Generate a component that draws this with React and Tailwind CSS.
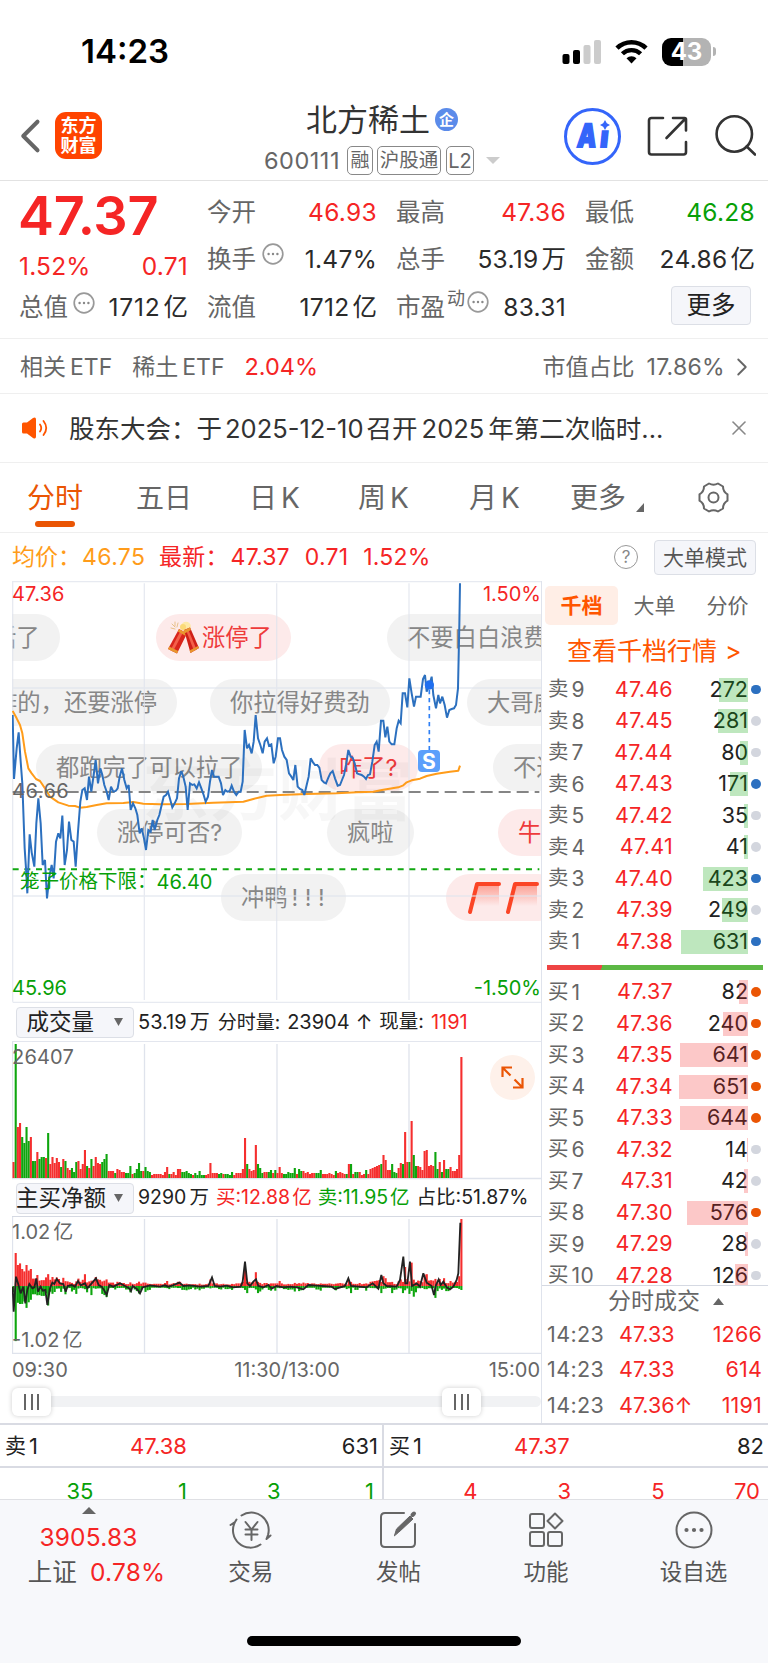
import { ChevronLeft, ChevronRight, X } from 'lucide-react';

const QUOTE_COLUMNS = [
  [
    { label: '今开', value: '46.93', color: 'text-[#f52525]' },
    { label: '换手', tip: true, value: '1.47%', color: 'text-[#2a2a2a]' },
    { label: '流值', value: '1712', unit: '亿', color: 'text-[#2a2a2a]' },
  ],
  [
    { label: '最高', value: '47.36', color: 'text-[#f52525]' },
    { label: '总手', value: '53.19', unit: '万', color: 'text-[#2a2a2a]' },
    { label: '市盈', sup: '动', tip: true, value: '83.31', color: 'text-[#2a2a2a]' },
  ],
];

const TABS = [
  { name: '分时', width: 'w-[109px]' },
  { name: '五日', width: 'w-[113px]' },
  { name: '日', k: true, width: 'w-[109px]' },
  { name: '周', k: true, width: 'w-[111px]' },
  { name: '月', k: true, width: 'w-[110px]' },
];

const SELLS = [
  ['9', '47.46', 272, true],
  ['8', '47.45', 281, false],
  ['7', '47.44', 80, false],
  ['6', '47.43', 171, true],
  ['5', '47.42', 35, false],
  ['4', '47.41', 41, false],
  ['3', '47.40', 423, true],
  ['2', '47.39', 249, false],
  ['1', '47.38', 631, true],
];

const BUYS = [
  ['1', '47.37', 82, true],
  ['2', '47.36', 240, true],
  ['3', '47.35', 641, true],
  ['4', '47.34', 651, true],
  ['5', '47.33', 644, true],
  ['6', '47.32', 14, false],
  ['7', '47.31', 42, false],
  ['8', '47.30', 576, true],
  ['9', '47.29', 28, false],
  ['10', '47.28', 126, false],
];

const TRADES = [
  ['14:23', '47.33', '1266'],
  ['14:23', '47.33', '614'],
  ['14:23', '47.36↑', '1191'],
];

// one bar per minute: direction + height
const VOLUMES = (
  'r16 g134 r51 r55 g41 g35 g51 g37 r41 g17 g17 r26 g19 g21 g21 r20 g45 r14 r21 r15 r20 r16 g11 r19 g17 r10 r8 g10 g6 g16 ' +
  'r17 r9 r14 r28 g12 r10 g19 r12 r21 r15 r14 g16 g19 g24 r7 r7 r7 g5 r9 r8 r6 r6 g5 g5 g12 r4 g5 g9 g15 g7 r7 g11 g7 g6 ' +
  'r3 r4 r4 r4 r4 r3 r6 r11 g4 r4 r6 r3 r9 r9 g6 g6 g7 g5 g4 r3 g5 g3 g7 g3 g3 r3 r4 r15 r5 r5 r5 g4 g5 r4 g4 g4 g3 g6 r3 r5 ' +
  'r5 r5 r9 r40 g14 r9 r7 r8 r33 g14 g10 g5 r6 r6 g6 g8 r5 g8 r5 r11 r5 g4 g4 g6 g5 g5 g10 r4 g9 g7 r7 r5 r6 r4 r5 r5 g5 g5 ' +
  'g8 r4 r4 r4 r5 r4 r3 g7 r5 r6 r5 r4 g4 r14 g14 r4 g6 g6 r6 r3 r4 g8 r4 r9 r10 r11 r12 r13 g14 r23 r18 r8 r8 g14 g6 g5 r10 ' +
  'r15 g14 r46 r16 g16 r57 g23 g12 r12 r11 r8 r27 r28 r12 r13 r12 g26 g9 r16 g6 r18 g9 g9 r11 r7 r7 r9 r23 r121'
).split(' ').map((s) => ({ up: s[0] === 'r', h: Number(s.slice(1)) }));

const STEP = 450 / VOLUMES.length;

const PRICE_LINE =
  '38,420 42,612 50,520 56,472 62,560 67,625 74,820 78,880 82,955 89,778 95,832 103,875 109,745 115,670 122,745 128,870 135,855 141,970 148,905 155,870 161,910 168,800 175,775 181,790 187,722 194,870 201,825 207,740 214,795 221,800 227,875 234,770 241,680 247,645 254,640 261,675 267,605 274,650 281,600 287,555 294,625 301,580 307,600 313,630 320,650 326,675 333,635 340,650 347,648 353,640 359,605 366,580 373,615 380,640 386,630 392,705 399,685 406,700 412,720 419,775 425,760 432,790 438,825 445,765 452,770 458,735 464,765 472,735 478,720 485,690 491,665 498,660 504,650 511,675 517,697 524,685 531,670 537,610 544,588 550,605 557,635 563,705 570,625 577,630 583,628 590,640 597,622 604,640 611,660 617,680 624,665 630,620 636,585 642,605 656,605 663,625 669,660 676,645 682,650 689,648 695,632 702,650 709,660 716,650 722,650 728,620 734,465 741,520 747,510 755,535 761,500 767,420 774,490 781,510 788,535 794,500 801,490 807,512 814,508 821,565 827,545 834,490 840,490 846,525 853,545 860,555 867,595 874,605 880,615 886,570 893,635 900,642 907,645 913,660 920,630 926,605 932,550 939,562 945,570 952,570 958,578 965,615 972,622 978,625 985,608 991,595 998,588 1005,610 1013,632 1020,630 1026,615 1032,600 1038,570 1045,525 1052,545 1058,548 1064,565 1071,595 1078,598 1085,600 1092,605 1098,612 1104,600 1110,598 1117,560 1124,510 1130,500 1136,530 1143,437 1150,437 1156,487 1162,455 1168,500 1175,508 1183,508 1190,460 1196,437 1202,445 1208,355 1215,355 1222,397 1228,310 1235,355 1242,395 1248,365 1262,365 1269,312 1275,300 1280,350 1288,330 1295,305 1300,360 1308,400 1315,360 1320,385 1327,365 1334,390 1341,428 1348,405 1355,402 1362,400 1368,390 1374,340 1378,150 1380,25';

const AVG_LINE =
  '38,408 50,430 60,450 67,475 75,530 85,580 95,595 108,612 120,618 135,640 150,665 175,682 205,692 225,693 240,698 260,696 290,690 320,685 370,684 400,681 430,686 480,688 560,687 640,683 730,680 760,672 800,662 840,660 920,657 1010,655 1070,652 1120,650 1150,644 1195,637 1210,631 1220,622 1235,616 1260,611 1280,603 1310,596 1350,590 1375,587 1380,572';

const NET_LINE =
  '38,860 41,935 48,830 54,850 62,880 70,860 76,910 82,870 88,852 97,865 103,862 109,835 114,875 122,860 128,872 136,870 142,915 150,865 157,848 163,852 170,837 180,850 190,852 197,875 203,858 215,855 225,860 234,843 242,856 255,850 262,865 275,850 288,835 296,855 305,860 312,870 320,885 328,855 340,860 360,850 375,858 388,865 393,873 398,858 412,868 420,880 428,862 450,856 480,860 495,856 505,860 518,856 538,848 550,858 570,856 600,860 625,858 636,832 644,858 660,860 680,857 700,862 722,860 728,845 735,785 742,850 750,858 760,845 768,838 775,858 790,862 805,855 815,866 830,858 850,862 870,860 890,862 910,868 925,855 950,857 995,860 1005,867 1035,858 1045,835 1053,858 1100,862 1118,850 1135,866 1144,825 1150,850 1160,858 1190,860 1200,840 1210,770 1216,850 1222,850 1230,785 1236,858 1250,850 1260,860 1270,820 1280,848 1295,858 1302,885 1308,855 1316,838 1322,855 1330,845 1340,862 1350,868 1360,860 1370,840 1375,820 1381,668';

const Tip = () => (
  <svg className="w-[22px] h-[22px] -mt-2.5 shrink-0" viewBox="0 0 22 22" fill="none">
    <circle cx="11" cy="11" r="9.8" stroke="#999" strokeWidth="1.7" />
    <circle cx="6.6" cy="11" r="1.2" fill="#888" />
    <circle cx="11" cy="11" r="1.2" fill="#888" />
    <circle cx="15.4" cy="11" r="1.2" fill="#888" />
  </svg>
);

const QuoteCell = ({ label, sup, tip, value, unit, color }) => (
  <div className="flex items-center justify-between h-[47.5px]">
    <div className="flex items-center text-[#666] -ml-px">
      {label}
      {sup && <span className="text-[18px] -mt-4 ml-0.5 mr-0.5">{sup}</span>}
      {tip && <span className={sup ? '' : 'ml-[6px]'}><Tip /></span>}
    </div>
    <div className={`flex items-center tracking-[0.3px] ${color}`}>
      {value}
      {unit && <span className="ml-[3px] tracking-normal">{unit}</span>}
    </div>
  </div>
);

const Pill = ({ className, red, children }) => (
  <div
    className={`absolute h-[47px] rounded-full px-5 flex items-center whitespace-nowrap text-[23.3px] ${
      red ? 'bg-[#fdeaea] text-[#ee3b3b]' : 'bg-[#f2f2f2] text-[#878787]'
    } ${className}`}
  >
    {children}
  </div>
);

const Firecracker = () => (
  <svg className="w-[32px] h-[34px] -ml-[9px] mr-[3px] shrink-0" viewBox="0 0 32 34" fill="none">
    <circle cx="19" cy="5.5" r="4.8" fill="#fde9a6" />
    <circle cx="16" cy="6" r="3" fill="#fbd976" />
    <path d="M5 3l3 3M11 2l-1 4M4 7l4 1M8 1v4" stroke="#e8c08a" strokeWidth="1" strokeLinecap="round" />
    <path d="M12 8l8 4.500-10 20-9-4.500z" fill="#d9251c" />
    <path d="M14 9l2.500 1.500L6 30.500l-2.500-1.200z" fill="#f4604a" />
    <path d="M12 8l8 4.500-1.200 2.500-8-4.500zM2.200 25.500l9 4.500-1.200 2.500-9-4.500z" fill="#e8962f" />
    <path d="M17 9l6-2.500 9 20.500-8.500 5z" fill="#cf2018" />
    <path d="M19 9l2-1 8.500 20.500-2.500 1.500z" fill="#f4604a" />
    <path d="M16.500 9.500L23 6.500l1 2.500-6.500 3.500zM22.500 29.500l8.500-4.500 1 2-8.500 5z" fill="#e8962f" />
  </svg>
);

const RisingMark = () => (
  <svg className="w-[38px] h-[36px] shrink-0" viewBox="0 0 38 36" fill="none">
    <defs>
      <linearGradient id="mark-fade" x1="0" y1="0" x2="0" y2="1">
        <stop offset="0" stopColor="#fb6a55" stopOpacity="0.6" />
        <stop offset="1" stopColor="#fb6a55" stopOpacity="0" />
      </linearGradient>
    </defs>
    <path d="M11 4h22v22H6z" fill="url(#mark-fade)" />
    <path d="M4 32L11 4h22" stroke="#fb4526" strokeWidth="4" strokeLinecap="round" strokeLinejoin="round" />
  </svg>
);

const StatusBar = () => (
  <div className="h-[94px] pt-[9px] flex items-center justify-between pl-[81px] pr-[52px]">
    <div className="text-[33px] font-semibold text-black">14:23</div>
    <div className="flex items-center">
      <svg className="w-[39px] h-[24px]" viewBox="0 0 39 24">
        <rect x="0.5" y="14" width="7" height="10" rx="2" fill="#000" />
        <rect x="11" y="10" width="7" height="14" rx="2" fill="#000" />
        <rect x="21.5" y="5" width="7" height="19" rx="2" fill="#ccc" />
        <rect x="32" y="0" width="7" height="24" rx="2" fill="#ccc" />
      </svg>
      <svg className="w-[33px] h-[25px] ml-[14px]" viewBox="0 0 33 25" fill="none">
        <path d="M2 9.2a20.8 20.8 0 0 1 29 0" stroke="#000" strokeWidth="4.6" />
        <path d="M7.4 14.8a13 13 0 0 1 18.2 0" stroke="#000" strokeWidth="4.4" />
        <path d="M16.5 24.5l-5-5.2a7.2 7.2 0 0 1 10 0z" fill="#000" />
      </svg>
      <div className="relative ml-[14px] w-[49px] h-[28px] rounded-[9px] overflow-hidden bg-gradient-to-r from-black from-42% to-[#b3b3b3] to-42% flex items-center justify-center text-white text-[24px] font-bold">
        43
      </div>
      <div className="w-[3px] h-[9px] ml-[2px] rounded-r-full bg-[#b3b3b3]" />
    </div>
  </div>
);

const Header = () => (
  <header className="h-[87px] border-b border-[#e2e2e2] grid grid-cols-[204px_356px_208px]">
    <div className="flex items-center pl-[9px] pb-[3px]">
      <ChevronLeft className="w-[38px] h-[50px] text-[#666]" strokeWidth={1.7} viewBox="3 4 16 16" />
      <div className="ml-[8px] w-[47px] h-[47px] rounded-[11px] bg-[#ff4400] text-white font-bold text-[18px] leading-[19.5px] flex flex-col items-center justify-center">
        <span>东方</span>
        <span>财富</span>
      </div>
    </div>
    <div className="flex flex-col items-center">
      <div className="h-[51px] flex items-center text-[31px] text-[#333]">
        北方稀土
        <span className="ml-[5px] w-[23px] h-[23px] rounded-full bg-[#5b8bea] text-white text-[15px] font-bold flex items-center justify-center">企</span>
      </div>
      <div className="h-[31px] flex items-center text-[23.5px] text-[#666]">
        <span className="tracking-[0.5px]">600111</span>
        <span className="ml-[7px] h-[29px] w-[26px] rounded-[5px] border-[1.5px] border-[#888] flex items-center justify-center text-[19px]">融</span>
        <span className="ml-[4px] h-[29px] w-[64px] rounded-[5px] border-[1.5px] border-[#888] flex items-center justify-center text-[19.5px]">沪股通</span>
        <span className="ml-[5px] h-[29px] w-[28px] rounded-[5px] border-[1.5px] border-[#888] flex items-center justify-center text-[20px]">L2</span>
        <svg className="ml-3 w-[14px] h-[7px]" viewBox="0 0 14 7"><path d="M0 0h14L7 7z" fill="#ccc" /></svg>
      </div>
    </div>
    <div className="flex items-center pl-1 pb-[2px]">
      <svg className="w-[57px] h-[57px]" viewBox="0 0 57 57" fill="none">
        <circle cx="28.5" cy="28.5" r="27" stroke="#3465fa" strokeWidth="3" />
        <g fill="#3465fa" stroke="#3465fa" strokeWidth="1.8" fontFamily="Inter" fontWeight="900">
          <text transform="translate(12.500 38.500) skewX(-6)" x="0" y="0" fontSize="32" textLength="19" lengthAdjust="spacingAndGlyphs">A</text>
          <text transform="translate(35.500 39) skewX(-6)" x="0" y="0" fontSize="29" textLength="8" lengthAdjust="spacingAndGlyphs">ı</text>
        </g>
        <path d="M41 12l1.800 3.200 3.200 1.800-3.200 1.800L41 22l-1.800-3.200L36 17l3.200-1.800z" fill="#3465fa" />
      </svg>
      <svg className="w-[42px] h-[42px] ml-[25px]" viewBox="0 0 42 42" fill="none" stroke="#333" strokeWidth="2.6" strokeLinecap="round">
        <path d="M17 3H5.500Q3 3 3 5.500V37Q3 39.500 5.500 39.500H37.500Q40 39.500 40 37V27" />
        <path d="M20.500 23L39.500 3.500M27 3H38.500Q40 3 40 4.500V15.500" />
      </svg>
      <svg className="w-[42px] h-[42px] ml-[26px]" viewBox="0 0 42 42" fill="none" stroke="#333" strokeWidth="2.6" strokeLinecap="round">
        <circle cx="20.300" cy="19" r="17.700" />
        <path d="M32.700 31.500L41 39.500" />
      </svg>
    </div>
  </header>
);

const Quote = () => (
  <section className="h-[158px] pt-[7px] pl-[19px] grid grid-cols-[169px_169px_169px_169px] gap-x-5 text-[24.5px] leading-none border-b border-[#efefef]">
    <div className="text-[#f52525]">
      <div className="h-[54px] flex items-center text-[54px] font-semibold tracking-[-0.3px] -ml-px pt-px">47.37</div>
      <div className="h-[48px] flex items-center justify-between tracking-[0.2px]">
        <span>1.52%</span>
        <span>0.71</span>
      </div>
      <div className="h-[35px] flex items-center justify-between text-[#2a2a2a]">
        <span className="flex items-center text-[#666]">
          总值<span className="ml-[5px]"><Tip /></span>
        </span>
        <span className="flex items-center tracking-[0.8px]">1712<span className="ml-[3px] tracking-normal">亿</span></span>
      </div>
    </div>
    {QUOTE_COLUMNS.map((column, i) => (
      <div key={i}>
        {column.map((cell) => <QuoteCell key={cell.label} {...cell} />)}
      </div>
    ))}
    <div>
      <QuoteCell label="最低" value="46.28" color="text-[#07a007]" />
      <QuoteCell label="金额" value="24.86" unit="亿" color="text-[#2a2a2a]" />
      <div className="h-[47px] flex items-center justify-end pr-[4px]">
        <button className="mt-[-3px] w-[80px] h-[39px] rounded-[4px] bg-[#f5f6fa] border border-[#dcdfe6] text-[#222]">更多</button>
      </div>
    </div>
  </section>
);

const ChartTabs = () => (
  <div className="h-[70px] border-b border-[#efefef] flex items-stretch pl-[27px] text-[28px] text-[#666]">
    {TABS.map((tab, i) => (
      <div key={tab.name} className={`relative flex items-center ${tab.width} ${i === 0 ? 'text-[#ea5504]' : ''}`}>
        {tab.name}
        {tab.k && <span className="ml-[4px]">K</span>}
        {i === 0 && <span className="absolute left-[8px] bottom-[5px] w-[40px] h-[6px] rounded-full bg-[#ea5504]" />}
      </div>
    ))}
    <div className="flex items-center -ml-[9px]">
      更多
      <svg className="w-[8px] h-[9px] ml-[10px] mt-[20px]" viewBox="0 0 8 9"><path d="M8 0v9H0z" fill="#666" /></svg>
    </div>
    <svg className="w-[33px] h-[33px] ml-[53px] mt-[18px]" viewBox="0 0 33 33" fill="none" stroke="#666" strokeWidth="2">
      <path strokeLinejoin="round" d="M12 2.500q4.500 2.600 9 0l5 3q0 5.200 4.500 7.800v6.400q-4.500 2.600-4.500 7.800l-5 3q-4.500-2.600-9 0l-5-3q0-5.200-4.500-7.800v-6.400q4.500-2.600 4.500-7.800z" />
      <circle cx="16.500" cy="16.500" r="5" />
    </svg>
  </div>
);

const PriceChart = () => (
  <div className="relative h-[422px] ml-3 overflow-hidden text-[20px] leading-none">
    <Pill className="-left-[39px] top-[33px]">话了</Pill>
    <Pill red className="left-[144px] top-[33px] w-[135px]"><Firecracker />涨停了</Pill>
    <Pill className="left-[375px] top-[33px]">不要白白浪费</Pill>
    <Pill className="-left-[38px] top-[98px]">炸的，还要涨停</Pill>
    <Pill className="left-[198px] top-[98px]">你拉得好费劲</Pill>
    <Pill className="left-[455px] top-[98px]">大哥威武</Pill>
    <Pill className="left-[24px] top-[163px]">都跑完了可以拉了</Pill>
    <Pill red className="left-[307px] top-[163px]">咋了?</Pill>
    <Pill className="left-[481px] top-[163px]">不过如此</Pill>
    <Pill className="left-[85px] top-[228px]">涨停可否?</Pill>
    <Pill className="left-[315px] top-[228px]">疯啦</Pill>
    <Pill red className="left-[486px] top-[228px]">牛牛牛</Pill>
    <Pill className="left-[209px] top-[293px] w-[125px]">冲鸭<span className="tracking-[6.500px] ml-[4px]">!!!</span></Pill>
    <Pill red className="left-[434px] top-[293px]"><RisingMark /><RisingMark /></Pill>
    <div className="absolute left-[130px] top-[176px] text-[67px] font-bold text-black/3 tracking-[1px] whitespace-nowrap">东方财富</div>
    <svg className="absolute inset-0 w-[530px] h-[422px]" viewBox="36 18 1590 1266" fill="none">
      <g stroke="#dfe3ec" strokeOpacity="0.75" strokeWidth="4">
        <path d="M38 1280V20H1626M433 25V1275M830 25V1275M1227 25V1275M38 339H1624M38 963H1624M38 1282H1626" />
      </g>
      <path d="M38 651H1618" stroke="#858585" strokeWidth="6" strokeDasharray="36 18" />
      <path d="M38 883H1618" stroke="#12a812" strokeWidth="6" strokeDasharray="18 17" />
      <polyline points={AVG_LINE} stroke="#ff9c1a" strokeWidth="6" strokeLinejoin="round" />
      <polyline points={PRICE_LINE} stroke="#2c70bf" strokeWidth="6" strokeMiterlimit="3" />
      <path d="M1288 345V525" stroke="#2f80f5" strokeWidth="5" strokeDasharray="13 11" />
      <circle cx="1288" cy="330" r="14" fill="#1f6ff0" />
    </svg>
    <div className="absolute left-[406px] top-[169px] w-[22px] h-[22px] rounded-[4px] bg-[#5b9ffb] text-white font-bold text-[21px] flex items-center justify-center">S</div>
    <div className="absolute left-0 top-[3px] text-[#f52525] tracking-[0.2px]">47.36</div>
    <div className="absolute right-0 top-[3px] text-[#f52525]">1.50%</div>
    <div className="absolute left-0 top-[200px] text-[#666] tracking-[0.5px]">46.66</div>
    <div className="absolute left-[8px] top-[291px] text-[#07a007] text-[19.5px] flex whitespace-nowrap">笼子价格下限：<span className="text-[20px]">46.40</span></div>
    <div className="absolute left-0 top-[397px] text-[#07a007]">45.96</div>
    <div className="absolute right-0 top-[397px] text-[#07a007]">-1.50%</div>
  </div>
);

const Selector = ({ children }) => (
  <div className="ml-1 w-[118px] h-[31px] shrink-0 rounded-[4px] bg-[#f5f6fa] border border-[#dcdfe6] flex items-center justify-end pr-[10px] text-[22.500px] text-[#222] whitespace-nowrap">
    {children}
    <svg className="w-[9px] h-[8px] ml-[8px] shrink-0" viewBox="0 0 9 8"><path d="M0 0h9L4.500 8z" fill="#666" /></svg>
  </div>
);

const VolumeChart = () => (
  <div className="relative h-[139px] border-t border-[#e3e6ee] text-[20px] leading-none">
    <svg className="w-[530px] h-[138px]" viewBox="0 0 530 138" fill="none">
      <path d="M.5 0V137M132.500 2V137M265 2V137M397 2V137M0 136.500H530" stroke="#dfe3ec" strokeWidth="1.3" />
      {VOLUMES.map((v, i) => (
        <rect key={i} x={0.5 + i * STEP} y={136 - v.h} width="2.1" height={v.h} fill={v.up ? '#f52f2f' : '#0ea50e'} />
      ))}
    </svg>
    <div className="absolute left-0 top-[5px] text-[#666] tracking-[0.2px]">26407</div>
    <div className="absolute right-[6px] top-[13px] w-[45px] h-[45px] rounded-full bg-[#fef1ea] flex items-center justify-center">
      <svg className="w-[23px] h-[23px]" viewBox="0 0 23 23" fill="none" stroke="#ea5504" strokeWidth="2.200">
        <path d="M1.500 11V1.500H11M1.500 1.500l8 8M21.500 12v9.500H12M21.500 21.500l-8-8" />
      </svg>
    </div>
  </div>
);

const NetChart = () => (
  <div className="relative h-[138px] border-t border-[#d5d9e2] text-[20px] leading-none">
    <svg className="w-[530px] h-[137px]" viewBox="0 0 530 137" fill="none">
      <path d="M.5 0V137M132.500 2V137M265 2V137M397 2V137M0 136.500H530" stroke="#dfe3ec" strokeWidth="1.3" />
      {VOLUMES.map((v, i) => {
        const buy = i === 0 ? 0 : v.h > 100 ? (v.up ? 67 : 33) : v.h * (v.up || i < 12 ? 0.4 : 0.25) + 0.6;
        const sell = v.h > 100 && v.up ? 4 : v.h * (v.up ? (i < 20 ? 0.3 : 0.06) : 0.4) + 1.5;
        return (
          <g key={i}>
            <rect x={0.5 + i * STEP} y={69 - buy} width="2.1" height={buy} fill="#f52f2f" />
            <rect x={0.5 + i * STEP} y="69" width="2.1" height={sell} fill="#0ea50e" />
          </g>
        );
      })}
      <g transform="translate(-12 -217) scale(0.33333)">
        <polyline points={NET_LINE} stroke="#222" strokeWidth="5.500" strokeMiterlimit="3" />
      </g>
    </svg>
    <div className="absolute left-0 top-[5px] text-[#666] flex">1.02<span className="ml-[3px]">亿</span></div>
    <div className="absolute left-0 top-[113px] text-[#666] flex">-1.02<span className="ml-[3px]">亿</span></div>
  </div>
);

const Thumb = () => (
  <div className="w-[39px] h-[28px] rounded-[6px] bg-white shadow-[0_0_5px_rgba(0,0,0,0.2)] flex items-center justify-center gap-[4.500px]">
    <span className="w-[2px] h-[16px] bg-[#666]" />
    <span className="w-[2px] h-[16px] bg-[#666]" />
    <span className="w-[2px] h-[16px] bg-[#666]" />
  </div>
);

const Level = ({ side, row }) => {
  const [n, price, qty, big] = row;
  const sell = side === '卖';
  return (
    <div className="h-[31.5px] flex items-center text-[21.500px] shrink-0">
      <span className="w-[50px] flex items-center text-[#666] text-[20.500px]">
        {side}<span className="ml-[3px] text-[21px] tracking-[0.5px]">{n}</span>
      </span>
      <span className="w-[75px] text-right text-[#f52525] tracking-[0.3px]">{price}</span>
      <span className="relative w-[75px] h-[24px] flex items-center justify-end text-[#222]">
        {qty}
        <span
          className={`absolute right-0 top-0 h-full ${sell ? 'bg-[#0fa50f]/27' : 'bg-[#f52525]/25'}`}
          style={{ width: qty * 0.1056 }}
        />
      </span>
      <span className={`ml-[3px] w-[9.500px] h-[9.500px] rounded-full ${!big ? 'bg-[#d3d6de]' : sell ? 'bg-[#2c70c0]' : 'bg-[#ea5504]'}`} />
    </div>
  );
};

const OrderBook = () => (
  <aside className="w-[227px] border-l border-[#dfe3ec] flex flex-col leading-none">
    <div className="flex items-center h-[39px] mt-[5px] ml-[3px] text-[21px] text-[#666]">
      <span className="w-[73px] h-[39px] shrink-0 rounded-[5px] bg-[#ffeee6] text-[#ff5500] font-bold flex items-center justify-center">千档</span>
      <span className="w-[73px] text-center">大单</span>
      <span className="w-[73px] text-center">分价</span>
    </div>
    <div className="h-[47px] mt-[3px] flex items-center pl-[25px] text-[25px] text-[#ff5500] whitespace-nowrap">
      查看千档行情<span className="ml-[8px]">&gt;</span>
    </div>
    <div className="pl-[6px] -mt-px">
      {SELLS.map((row) => <Level key={row[0]} side="卖" row={row} />)}
    </div>
    <div className="ml-[5px] mt-[8px] w-[216px] h-[5px] shrink-0 bg-[linear-gradient(115deg,#ee4444_25.5%,#5cb845_25.5%)]" />
    <div className="pl-[6px] mt-[6px] h-[310px] shrink-0 overflow-hidden border-b border-[#d5d9e2]">
      {BUYS.map((row) => <Level key={row[0]} side="买" row={row} />)}
    </div>
    <div className="h-[31px] flex items-center pl-[66px] text-[23px] text-[#666]">
      分时成交
      <svg className="w-[11px] h-[7px] ml-[13px]" viewBox="0 0 11 7"><path d="M0 7h11L5.500 0z" fill="#666" /></svg>
    </div>
    {TRADES.map(([time, price, qty], i) => (
      <div key={i} className="h-[35.500px] flex items-center pl-[5px] pr-[6px] text-[21.500px] text-[#f52525]">
        <span className="w-[72px] text-[#666] tracking-[0.4px]">{time}</span>
        <span>{price}</span>
        <span className="ml-auto tracking-[0.2px]">{qty}</span>
      </div>
    ))}
  </aside>
);

const Depth = ({ name, price, qty, orders, className, orderClass }) => (
  <div className={`text-[22px] leading-none ${className}`}>
    <div className="h-[43px] flex items-center pl-[5px] pr-[4px] border-b-2 border-[#d9dbe3] text-[#222]">
      <span className="w-[125px] flex items-center text-[21px]">{name}<span className="ml-[3px] text-[22px]">1</span></span>
      <span className="text-[#f52525]">{price}</span>
      <span className="ml-auto">{qty}</span>
    </div>
    <div className={`h-[45px] flex items-center text-right ${orderClass}`}>
      {orders.map((n, i) => (
        <span key={i} className={i === 3 ? 'flex-1 pr-[8px]' : 'w-[93.500px]'}>{n}</span>
      ))}
    </div>
  </div>
);

const NavItem = ({ label, children }) => (
  <div className="w-[147.600px] flex flex-col items-center text-[22.500px] text-[#555]">
    <svg className="w-[44px] h-[40px] mt-[10px]" viewBox="0 0 44 40" fill="none" stroke="#666" strokeWidth="2" strokeLinecap="round" strokeLinejoin="round">
      {children}
    </svg>
    <span className="mt-[11px]">{label}</span>
  </div>
);

const BottomNav = () => (
  <nav className="h-[164px] bg-[#f7f8fb] border-t border-[#dfe0e4] relative leading-none">
    <div className="flex">
      <div className="w-[177px] flex flex-col items-center text-[24.500px] text-[#f52525] pt-[7px]">
        <svg className="w-[14px] h-[7px]" viewBox="0 0 14 7"><path d="M0 7h14L7 0z" fill="#666" /></svg>
        <span className="mt-[11px] tracking-[0.2px]">3905.83</span>
        <span className="mt-[10px] mr-[-16px] flex items-center tracking-[0.2px]">
          <span className="text-[#555] mr-[13px]">上证</span>0.78%
        </span>
      </div>
      <NavItem label="交易">
        <path d="M12.500 5.500A17.500 17.500 0 0 1 39 25l-1.500 4M41.500 25.500L37.500 29M31.500 34.500A17.500 17.500 0 0 1 6 12L1.500 15M6 12l1.500-2.500" />
        <path d="M16.500 12l6 7.500 6-7.500M22.500 19.500V30M16.500 19.500h12M16.500 24.500h12" />
      </NavItem>
      <NavItem label="发帖">
        <path d="M28 3H9Q5 3 5 7V33Q5 37 9 37H35Q39 37 39 33V14" />
        <path d="M18.500 25.500l2-6.500L34 6l3 3L23 22z" fill="#666" strokeWidth="1" />
        <path d="M36.500 5l1.500-1.500" strokeWidth="4" />
      </NavItem>
      <NavItem label="功能">
        <rect x="6" y="4" width="14" height="14" rx="2" />
        <path d="M31 3.500l7.500 7.500L31 18.500 23.500 11z" />
        <rect x="6" y="22" width="14" height="14" rx="2" />
        <rect x="24" y="22" width="14" height="14" rx="2" />
      </NavItem>
      <NavItem label="设自选">
        <circle cx="22" cy="20" r="17.500" />
        <path d="M14.500 20h.01M22 20h.01M29.500 20h.01" strokeWidth="4.200" />
      </NavItem>
    </div>
    <div className="absolute bottom-[17px] left-[247px] w-[274px] h-[10px] rounded-full bg-black" />
  </nav>
);

const App = () => (
  <div className="w-[768px] h-[1663px] bg-white overflow-hidden font-['Inter','Noto_Sans_CJK_SC',sans-serif] leading-none">
    <StatusBar />
    <Header />
    <Quote />

    <div className="h-[55px] pt-[2px] border-b border-[#efefef] flex items-center pl-5 pr-[11px] text-[23px] text-[#666]">
      <span className="flex items-center">相关<span className="ml-[4px]">ETF</span></span>
      <span className="ml-[20px] flex items-center">稀土<span className="ml-[4px]">ETF</span></span>
      <span className="ml-[20px] text-[23.500px] text-[#f52525]">2.04%</span>
      <span className="ml-auto">市值占比</span>
      <span className="ml-[12px] tracking-[0.3px]">17.86%</span>
      <ChevronRight className="w-[30px] h-[30px] ml-[2px]" strokeWidth={1.500} />
    </div>

    <div className="h-[69px] border-b border-[#efefef] flex items-center pl-[22px] pr-[17px] text-[25.500px] text-[#333]">
      <svg className="w-[27px] h-[24px]" viewBox="0 0 27 24" fill="none">
        <path d="M0 8q0-1.500 1.500-1.500H5L11 2q3-1.500 3 1.500v17q0 3-3 1.500l-6-4.500H1.500Q0 17.500 0 16z" fill="#ff5500" />
        <path d="M18 8.500q2.500 3.500 0 7M21.500 5q5.500 7 0 14" stroke="#ff5500" strokeWidth="1.800" strokeLinecap="round" />
      </svg>
      <span className="ml-[20px] pt-px flex items-center whitespace-nowrap">
        股东大会：于<span className="ml-[3px] mr-[3px]">2025-12-10</span>召开<span className="mx-[4px]">2025</span>年第二次临时...
      </span>
      <X className="ml-auto w-[24px] h-[24px] text-[#888]" strokeWidth={1.600} />
    </div>

    <ChartTabs />

    <div className="h-[48px] flex items-center pl-[12px] pr-[12px] text-[23px]">
      <span className="text-[#ff9c1a] w-[147px] flex items-center">均价：<span className="ml-px tracking-[0.4px]">46.75</span></span>
      <span className="text-[#f52525] flex items-center tracking-[0.2px]">
        最新：<span className="ml-[2px]">47.37</span>
        <span className="ml-[15px]">0.71</span>
        <span className="ml-[15px]">1.52%</span>
      </span>
      <span className="ml-auto w-[24px] h-[24px] rounded-full border-[1.500px] border-[#999] text-[#888] text-[17px] flex items-center justify-center">?</span>
      <button className="ml-[16px] w-[102px] h-[35px] rounded-[4px] bg-[#f5f6fa] border border-[#dcdfe6] text-[#555] text-[21px] whitespace-nowrap">大单模式</button>
    </div>

    <div className="flex h-[842px]">
      <div className="w-[541px]">
        <PriceChart />
        <div className="ml-3 h-[38px] flex items-center text-[20px] text-[#222] whitespace-nowrap">
          <Selector><span className="mr-[12px]">成交量</span></Selector>
          <span className="ml-[4px]">53.19</span>
          <span className="ml-[3px]">万</span>
          <span className="ml-[8px] text-[19px]">分时量:</span>
          <span className="ml-[7px]">23904</span>
          <span className="ml-[6px]">↑</span>
          <span className="ml-[7px] text-[19.500px]">现量:</span>
          <span className="ml-[7px] text-[#f52525]">1191</span>
        </div>
        <div className="ml-3"><VolumeChart /></div>
        <div className="ml-3 h-[36px] flex items-center text-[19.500px] text-[#222] whitespace-nowrap">
          <Selector>主买净额</Selector>
          <span className="ml-[4px]">9290</span>
          <span className="ml-[3px]">万</span>
          <span className="ml-[7px] text-[#f52525] flex">买:12.88<span className="ml-[2px]">亿</span></span>
          <span className="ml-[6px] text-[#07a007] flex">卖:11.95<span className="ml-[2px]">亿</span></span>
          <span className="ml-[7px]">占比:51.87%</span>
        </div>
        <div className="ml-3"><NetChart /></div>
        <div className="h-[31px] pl-[12px] pr-[1px] grid grid-cols-3 items-center text-[20px] text-[#666]">
          <span>09:30</span>
          <span className="text-center pl-[22px]">11:30/13:00</span>
          <span className="text-right">15:00</span>
        </div>
        <div className="relative ml-3 h-[33px] flex items-center">
          <div className="w-[529px] h-[11px] rounded-full bg-[#f1f2f4]" />
          <div className="absolute left-0"><Thumb /></div>
          <div className="absolute left-[430px]"><Thumb /></div>
        </div>
      </div>
      <OrderBook />
    </div>

    <div className="h-[76px] overflow-hidden border-t-2 border-[#d9dbe3] flex">
      <Depth name="卖" price="47.38" qty="631" orders={[35, 1, 3, 1]} className="w-[384px] border-r-2 border-[#d9dbe3]" orderClass="text-[#07a007]" />
      <Depth name="买" price="47.37" qty="82" orders={[4, 3, 5, 70]} className="flex-1" orderClass="text-[#f52525]" />
    </div>
    <BottomNav />
  </div>
);

export default App;
